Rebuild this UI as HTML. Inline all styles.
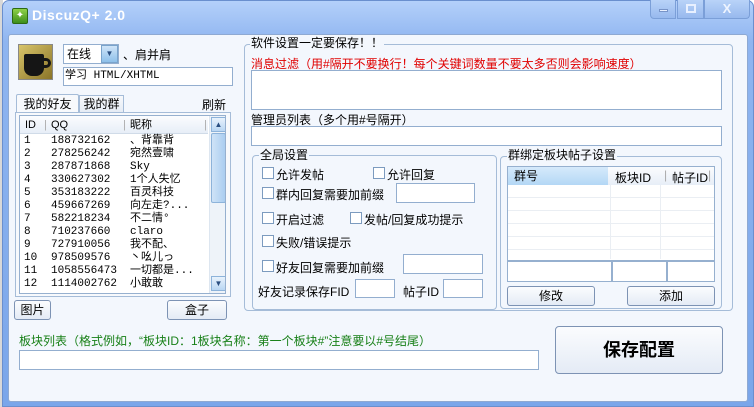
<!DOCTYPE html>
<html><head><meta charset="utf-8"><style>
*{box-sizing:border-box;margin:0;padding:0}
body{width:754px;height:407px;overflow:hidden;background:#fff;font:12px "Liberation Sans","WenQuanYi Zen Hei","Noto Sans CJK SC",sans-serif;color:#000;position:relative}
.a{position:absolute}
.win{left:2px;top:0;width:752px;height:407px;background:linear-gradient(#b4d0fa,#8fb5f0 10%,#7aa6ea);border:1px solid #6a8fce;border-radius:7px 7px 0 0}
.client{left:8px;top:34px;width:740px;height:368px;background:#f3f7fd;border:1px solid #8ea9d2;border-radius:3px}
.tb{background:#fff;border:1px solid #93aecf}
.btn{background:linear-gradient(#fbfcfe,#e4ebf5);border:1px solid #7d93b4;border-radius:3px;text-align:center}
.grp{border:1px solid #a5bcd8;border-radius:4px}
.lg{background:#f3f7fd;padding:0 1px;line-height:13px}
.cb{width:12px;height:12px;border:1px solid #7c9bbf;background:#fff}
.row{height:13px;line-height:13px}
</style></head><body>
<div class="a" style="left:0;top:0;width:3px;height:407px;background:#d8d8d8"></div>
<div class="a win"></div>
<div class="a" style="left:12px;top:8px;width:16px;height:16px;background:linear-gradient(#8fd14a,#3d8f1a);border:1px solid #2d6a12;border-radius:2px;color:#fff;font-size:10px;line-height:14px;text-align:center">✦</div>
<div class="a" style="left:32px;top:7px;color:#fff;font-weight:bold;font-size:14px;letter-spacing:0.5px">DiscuzQ+ 2.0</div>
<div class="a" style="left:650px;top:0;width:26px;height:19px;border:1px solid #7b9fd8;border-top:none;border-radius:0 0 0 4px;background:linear-gradient(#b9d3f8,#97b9ee)"><div class="a" style="left:8px;top:9px;width:9px;height:3px;background:#e8f0ff;border:1px solid #7894c8"></div></div>
<div class="a" style="left:677px;top:0;width:27px;height:19px;border:1px solid #7b9fd8;border-top:none;background:linear-gradient(#b9d3f8,#97b9ee)"><div class="a" style="left:8px;top:4px;width:10px;height:9px;border:2px solid #e8f0ff"></div></div>
<div class="a" style="left:704px;top:0;width:46px;height:19px;border:1px solid #7b9fd8;border-top:none;border-radius:0 0 4px 0;background:linear-gradient(#b9d3f8,#97b9ee);color:#eef4ff;font-weight:bold;font-size:13px;text-align:center;line-height:18px">X</div>
<div class="a client"></div>

<div class="a" style="left:18px;top:44px;width:35px;height:36px;background:linear-gradient(135deg,#d8c46a,#8a7428);border:1px solid #888"><div class="a" style="left:5px;top:9px;width:20px;height:22px;background:#151515;border-radius:2px 2px 8px 8px"></div><div class="a" style="left:24px;top:13px;width:8px;height:10px;border:3px solid #151515;border-left:none;border-radius:0 5px 5px 0"></div></div>
<div class="a tb" style="left:63px;top:44px;width:56px;height:20px;line-height:18px;padding-left:3px">在线</div>
<div class="a" style="left:101px;top:45px;width:17px;height:18px;background:linear-gradient(#cfe4f8,#8ec0ea);border:1px solid #7aa4cc;color:#2a4e80;font-size:8px;text-align:center;line-height:16px">▼</div>
<div class="a" style="left:123px;top:46px">、肩并肩</div>
<div class="a tb" style="left:63px;top:67px;width:170px;height:19px;line-height:17px;padding-left:1px;font-family:'Liberation Mono','WenQuanYi Zen Hei',monospace;font-size:11px">学习 HTML/XHTML</div>

<div class="a" style="left:16px;top:94px;width:63px;height:19px;background:#f7f9fc;border:1px solid #a5bcd8;border-bottom:none;line-height:18px;text-align:center;border-radius:2px 2px 0 0">我的好友</div>
<div class="a" style="left:79px;top:95px;width:45px;height:18px;background:linear-gradient(#f7f9fc,#e4ebf4);border:1px solid #a5bcd8;border-bottom:none;line-height:17px;text-align:center">我的群</div>
<div class="a" style="left:202px;top:96px">刷新</div>
<div class="a" style="left:15px;top:112px;width:216px;height:185px;border:1px solid #a5bcd8;background:#f7f9fc"></div>
<div class="a" style="left:19px;top:115px;width:207px;height:179px;background:#fff;border:1px solid #96b0cf;overflow:hidden">
<div class="a" style="left:0;top:0;width:188px;height:18px;background:linear-gradient(#fbfcfe,#e7eef7);border-bottom:1px solid #d0dbe8;line-height:18px;font-size:11px">
<span class="a" style="left:5px">ID</span><span class="a" style="left:24px;color:#aaa">|</span><span class="a" style="left:31px">QQ</span><span class="a" style="left:103px;color:#aaa">|</span><span class="a" style="left:110px">昵称</span><span class="a" style="left:184px;color:#aaa">|</span></div>
<div class="a" style="left:0;top:19px;width:188px;font-size:11px;font-family:'Liberation Mono','WenQuanYi Zen Hei',monospace">
<div class="row" style="position:relative"><span class="a" style="left:4px">1</span><span class="a" style="left:31px">188732162</span><span class="a" style="left:110px">、背靠背</span></div>
<div class="row" style="position:relative"><span class="a" style="left:4px">2</span><span class="a" style="left:31px">278256242</span><span class="a" style="left:110px">宛然壹啸</span></div>
<div class="row" style="position:relative"><span class="a" style="left:4px">3</span><span class="a" style="left:31px">287871868</span><span class="a" style="left:110px">Sky</span></div>
<div class="row" style="position:relative"><span class="a" style="left:4px">4</span><span class="a" style="left:31px">330627302</span><span class="a" style="left:110px">1个人失忆</span></div>
<div class="row" style="position:relative"><span class="a" style="left:4px">5</span><span class="a" style="left:31px">353183222</span><span class="a" style="left:110px">百灵科技</span></div>
<div class="row" style="position:relative"><span class="a" style="left:4px">6</span><span class="a" style="left:31px">459667269</span><span class="a" style="left:110px">向左走?...</span></div>
<div class="row" style="position:relative"><span class="a" style="left:4px">7</span><span class="a" style="left:31px">582218234</span><span class="a" style="left:110px">不二情°</span></div>
<div class="row" style="position:relative"><span class="a" style="left:4px">8</span><span class="a" style="left:31px">710237660</span><span class="a" style="left:110px">claro</span></div>
<div class="row" style="position:relative"><span class="a" style="left:4px">9</span><span class="a" style="left:31px">727910056</span><span class="a" style="left:110px">我不配、</span></div>
<div class="row" style="position:relative"><span class="a" style="left:4px">10</span><span class="a" style="left:31px">978509576</span><span class="a" style="left:110px">丶吆儿っ</span></div>
<div class="row" style="position:relative"><span class="a" style="left:4px">11</span><span class="a" style="left:31px">1058556473</span><span class="a" style="left:110px">一切都是...</span></div>
<div class="row" style="position:relative"><span class="a" style="left:4px">12</span><span class="a" style="left:31px">1114002762</span><span class="a" style="left:110px">小敢敢</span></div>
</div>
<div class="a" style="left:189px;top:0;width:17px;height:177px;background:#eef3f9;border-left:1px solid #dde6f0">
<div class="a" style="left:1px;top:1px;width:15px;height:15px;background:linear-gradient(#e8f2fc,#b9d6f3);border:1px solid #8db3da;font-size:8px;color:#2a4e80;text-align:center;line-height:13px">▲</div>
<div class="a" style="left:1px;top:17px;width:15px;height:70px;background:linear-gradient(90deg,#cfe3f7,#aacdf0);border:1px solid #8db3da;border-radius:2px"></div>
<div class="a" style="left:1px;top:160px;width:15px;height:15px;background:linear-gradient(#e8f2fc,#b9d6f3);border:1px solid #8db3da;font-size:8px;color:#2a4e80;text-align:center;line-height:13px">▼</div>
</div></div>
<div class="a btn" style="left:14px;top:300px;width:37px;height:20px;line-height:18px">图片</div>
<div class="a btn" style="left:167px;top:300px;width:60px;height:20px;line-height:18px">盒子</div>

<div class="a grp" style="left:244px;top:44px;width:489px;height:267px"></div>
<div class="a lg" style="left:250px;top:37px">软件设置一定要保存！！</div>
<div class="a" style="left:251px;top:55px;color:#e00000">消息过滤（用#隔开不要换行！每个关键词数量不要太多否则会影响速度）</div>
<div class="a tb" style="left:251px;top:70px;width:471px;height:40px"></div>
<div class="a" style="left:251px;top:111px">管理员列表（多个用#号隔开）</div>
<div class="a tb" style="left:251px;top:126px;width:471px;height:20px"></div>

<div class="a grp" style="left:252px;top:155px;width:245px;height:155px"></div>
<div class="a lg" style="left:259px;top:149px">全局设置</div>
<div class="a cb" style="left:262px;top:167px"></div><div class="a" style="left:276px;top:166px">允许发帖</div>
<div class="a cb" style="left:373px;top:167px"></div><div class="a" style="left:387px;top:166px">允许回复</div>
<div class="a cb" style="left:262px;top:187px"></div><div class="a" style="left:276px;top:186px">群内回复需要加前缀</div>
<div class="a tb" style="left:396px;top:183px;width:79px;height:20px"></div>
<div class="a cb" style="left:262px;top:212px"></div><div class="a" style="left:276px;top:211px">开启过滤</div>
<div class="a cb" style="left:350px;top:212px"></div><div class="a" style="left:364px;top:211px">发帖/回复成功提示</div>
<div class="a cb" style="left:262px;top:235px"></div><div class="a" style="left:276px;top:234px">失败/错误提示</div>
<div class="a cb" style="left:262px;top:260px"></div><div class="a" style="left:276px;top:259px">好友回复需要加前缀</div>
<div class="a tb" style="left:403px;top:254px;width:80px;height:20px"></div>
<div class="a" style="left:258px;top:283px">好友记录保存FID</div>
<div class="a tb" style="left:355px;top:279px;width:40px;height:19px"></div>
<div class="a" style="left:403px;top:283px">帖子ID</div>
<div class="a tb" style="left:443px;top:279px;width:40px;height:19px"></div>

<div class="a grp" style="left:500px;top:156px;width:222px;height:153px"></div>
<div class="a lg" style="left:507px;top:149px">群绑定板块帖子设置</div>
<div class="a" style="left:507px;top:166px;width:208px;height:116px;background:#fff;border:1px solid #96b0cf">
<div class="a" style="left:0;top:0;width:206px;height:18px;background:linear-gradient(#fbfcfe,#e7eef7)"></div>
<div class="a" style="left:0;top:0;width:100px;height:18px;background:linear-gradient(#d6eafb,#b3d7f5);line-height:18px;padding-left:6px">群号</div>
<span class="a" style="left:107px;top:2px">板块ID</span><span class="a" style="left:156px;top:1px;color:#aaa">|</span><span class="a" style="left:164px;top:2px">帖子ID</span><span class="a" style="left:200px;top:1px;color:#aaa">|</span>
<div class="a" style="left:0;top:18px;width:206px;height:74px;background:repeating-linear-gradient(#fff 0 12px,#eaeef3 12px 13px)"></div>
<div class="a" style="left:102px;top:18px;width:1px;height:74px;background:#eaeef3"></div>
<div class="a" style="left:152px;top:18px;width:1px;height:74px;background:#eaeef3"></div>
<div class="a" style="left:0;top:93px;width:206px;height:2px;background:#96b0cf"></div>
<div class="a" style="left:103px;top:93px;width:2px;height:22px;background:#96b0cf"></div>
<div class="a" style="left:158px;top:93px;width:2px;height:22px;background:#96b0cf"></div>
</div>
<div class="a btn" style="left:507px;top:286px;width:88px;height:20px;line-height:18px">修改</div>
<div class="a btn" style="left:627px;top:286px;width:88px;height:20px;line-height:18px">添加</div>

<div class="a" style="left:19px;top:332px;color:#188018">板块列表（格式例如，“板块ID：1板块名称：第一个板块#”注意要以#号结尾）</div>
<div class="a tb" style="left:19px;top:350px;width:520px;height:20px"></div>
<div class="a btn" style="left:555px;top:326px;width:168px;height:48px;line-height:46px;font-size:18px;font-weight:bold;border-radius:4px">保存配置</div>
</body></html>
